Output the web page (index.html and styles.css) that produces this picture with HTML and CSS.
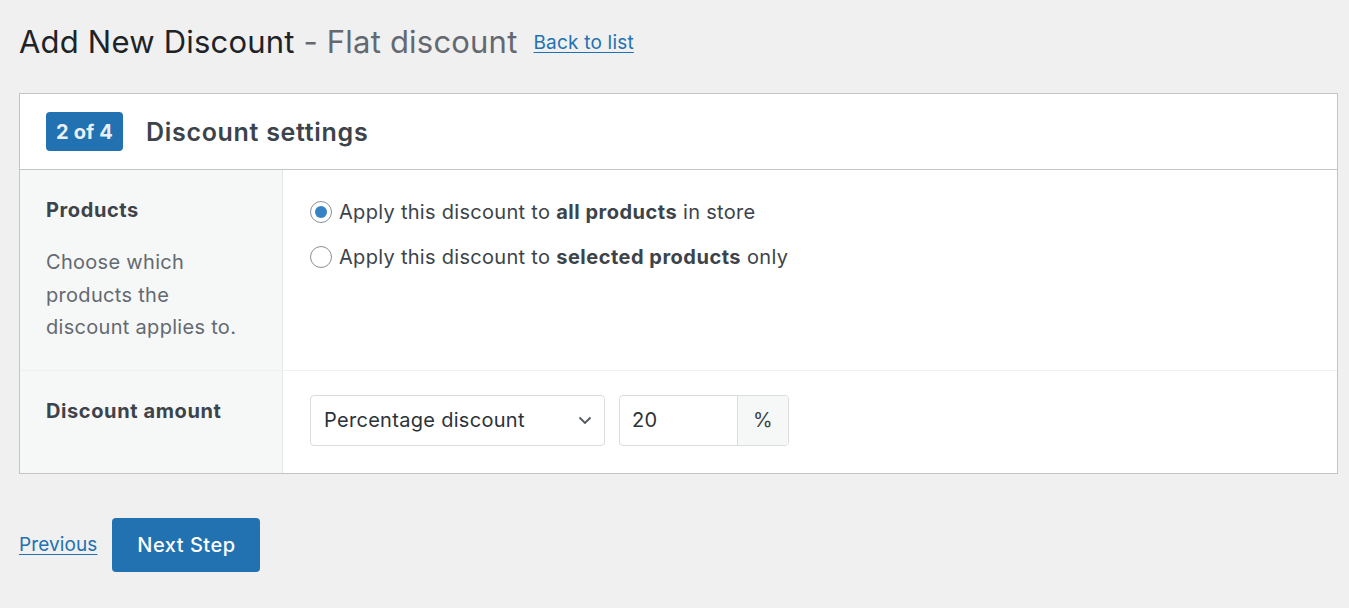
FILE: index.html
```html
<!DOCTYPE html>
<html lang="en">
<head>
<meta charset="utf-8">
<title>Add New Discount</title>
<link rel="stylesheet" href="styles.css">
</head>
<body>
<div class="wrap">
  <div class="page-head">
    <h1 class="page-title">Add New Discount <span class="subtitle">- Flat discount</span></h1>
    <a class="back-link" href="#">Back to list</a>
  </div>

  <div class="card">
    <div class="card-head">
      <span class="step-badge">2 of 4</span>
      <h2 class="card-title">Discount settings</h2>
    </div>
    <div class="form-row row-products">
      <div class="label-col">
        <div class="label">Products</div>
        <p class="desc">Choose which products the discount applies to.</p>
      </div>
      <div class="field-col radios">
        <label class="radio-line">
          <span class="radio checked"></span>
          <span>Apply this discount to <strong>all products</strong> in store</span>
        </label>
        <label class="radio-line">
          <span class="radio"></span>
          <span>Apply this discount to <strong>selected products</strong> only</span>
        </label>
      </div>
    </div>
    <div class="form-row row-amount">
      <div class="label-col">
        <div class="label">Discount amount</div>
      </div>
      <div class="field-col inline-fields">
        <div class="select">
          <span>Percentage discount</span>
          <svg class="chevron" width="14" height="9" viewBox="0 0 14 9"><path d="M1.5 1.5 L7 7 L12.5 1.5" fill="none" stroke="#50575e" stroke-width="1.8"/></svg>
        </div>
        <div class="input-group">
          <span class="input-value">20</span>
          <span class="addon">%</span>
        </div>
      </div>
    </div>
  </div>

  <div class="actions">
    <a class="prev-link" href="#">Previous</a>
    <button class="btn-primary" type="button">Next Step</button>
  </div>
</div>
</body>
</html>
```

FILE: styles.css
```css
html, body {
  margin: 0;
  padding: 0;
  background: #f0f0f1;
}
body {
  font-family: Inter, "Noto Sans", "Liberation Sans", sans-serif;
  color: #3c434a;
  letter-spacing: 0.3px;
}
.wrap {
  padding: 19px 11px 0 19px;
}
.page-head {
  display: flex;
  align-items: center;
  gap: 16px;
  height: 46px;
}
.page-title {
  margin: 0;
  font-size: 31px;
  font-weight: 400;
  color: #1d2327;
  letter-spacing: 0.2px;
  line-height: 46px;
}
.subtitle {
  color: #646970;
}
.back-link {
  font-size: 19px;
  color: #2271b1;
  text-decoration: underline;
  text-underline-offset: 3px;
  letter-spacing: 0.2px;
  margin-top: 1px;
}
.card {
  margin-top: 28px;
  background: #fff;
  border: 1px solid #c3c4c7;
}
.card-head {
  display: flex;
  align-items: center;
  gap: 23px;
  height: 75px;
  padding: 0 26px;
  border-bottom: 1px solid #c3c4c7;
}
.step-badge {
  display: inline-flex;
  align-items: center;
  justify-content: center;
  width: 77px;
  height: 39px;
  background: #2271b1;
  color: #e8f0f7;
  border-radius: 4px;
  font-size: 20px;
  font-weight: 700;
  letter-spacing: 0.2px;
}
.card-title {
  margin: 0;
  font-size: 25px;
  font-weight: 600;
  color: #3c434a;
  letter-spacing: 0.7px;
}
.form-row {
  display: flex;
}
.row-products {
  border-bottom: 1px solid #f0f0f1;
  min-height: 199px;
}
.row-amount {
  min-height: 102px;
}
.label-col {
  width: 200px;
  flex: none;
  padding: 26px 36px 26px 26px;
  background: #f6f7f7;
  border-right: 1px solid #e6e6e8;
  font-size: 20px;
}
.label {
  font-weight: 700;
  color: #3c434a;
  line-height: 28px;
  letter-spacing: 0.6px;
}
.desc {
  margin: 22px 0 0;
  color: #646970;
  line-height: 32.5px;
}
.field-col {
  flex: 1;
  padding: 26px 27px;
  font-size: 20px;
}
.radios {
  padding-top: 28px;
}
.radio-line {
  display: flex;
  align-items: center;
  gap: 7px;
  line-height: 28px;
  margin-bottom: 17px;
  color: #3c434a;
}
.radio-line strong {
  color: #3c434a;
  font-weight: 700;
  letter-spacing: 0.5px;
}
.radio {
  width: 20px;
  height: 20px;
  border: 1px solid #8c8f94;
  border-radius: 50%;
  background: #fff;
  display: inline-flex;
  align-items: center;
  justify-content: center;
  box-sizing: content-box;
  flex: none;
}
.radio.checked::after {
  content: "";
  width: 12px;
  height: 12px;
  border-radius: 50%;
  background: #3582c4;
}
.inline-fields {
  display: flex;
  align-items: flex-start;
  gap: 14px;
  padding-top: 24px;
}
.select {
  box-sizing: border-box;
  width: 295px;
  height: 51px;
  border: 1px solid #dcdcde;
  border-radius: 4px;
  display: flex;
  align-items: center;
  justify-content: space-between;
  padding: 0 12px 0 13px;
  color: #2c3338;
  background: #fff;
}
.input-group {
  box-sizing: border-box;
  width: 170px;
  height: 51px;
  border: 1px solid #dcdcde;
  border-radius: 4px;
  display: flex;
  overflow: hidden;
}
.input-value {
  flex: 1;
  display: flex;
  align-items: center;
  padding-left: 12px;
  color: #2c3338;
}
.addon {
  width: 50px;
  background: #f6f7f7;
  border-left: 1px solid #dcdcde;
  display: flex;
  align-items: center;
  justify-content: center;
  color: #3c434a;
}
.actions {
  display: flex;
  align-items: center;
  gap: 15px;
  margin-top: 44px;
}
.prev-link {
  font-size: 19px;
  color: #2271b1;
  text-decoration: underline;
  text-underline-offset: 3px;
  letter-spacing: 0.1px;
}
.btn-primary {
  width: 148px;
  height: 54px;
  background: #2271b1;
  color: #fff;
  border: none;
  border-radius: 4px;
  font-family: inherit;
  font-size: 20px;
  font-weight: 500;
  letter-spacing: 0.5px;
  cursor: pointer;
}
```
